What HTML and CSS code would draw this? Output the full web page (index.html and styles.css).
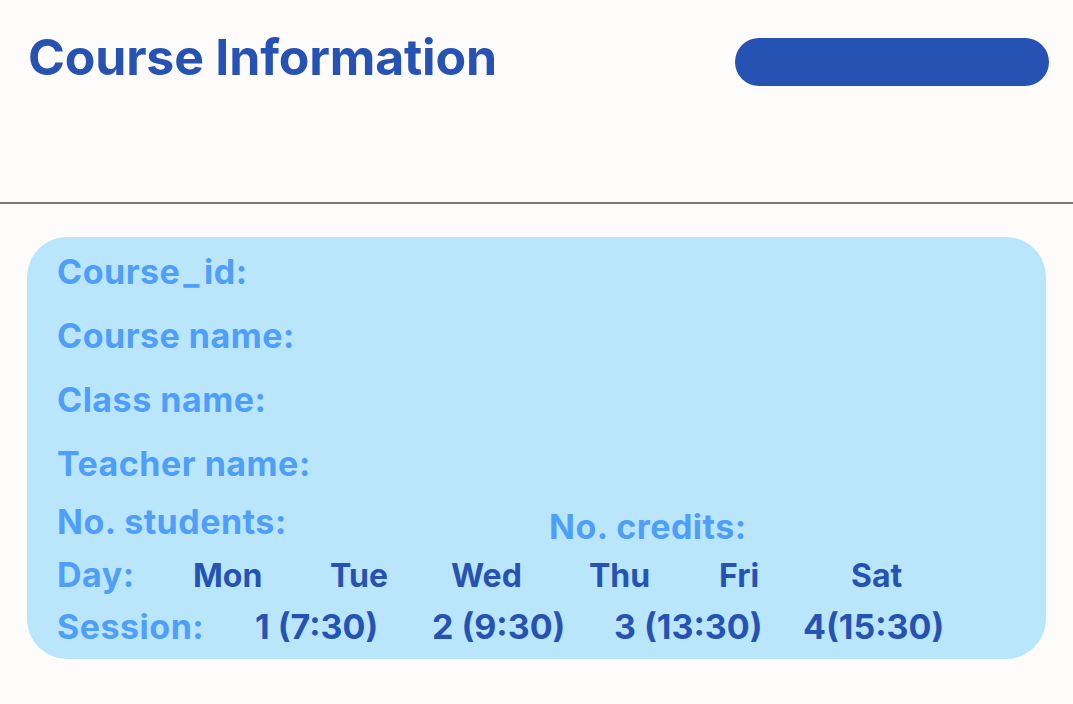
FILE: index.html
```html
<!DOCTYPE html>
<html>
<head>
<meta charset="utf-8">
<link rel="stylesheet" href="styles.css">
</head>
<body>
<header class="top">
  <h1 class="title">Course Information</h1>
  <div class="pill"></div>
</header>
<section class="card">
  <div class="row r1"><span class="label">Course<span class="us">_</span>id:</span></div>
  <div class="row r2"><span class="label">Course name:</span></div>
  <div class="row r3"><span class="label">Class name:</span></div>
  <div class="row r4"><span class="label">Teacher name:</span></div>
  <div class="row pair">
    <span class="label">No. students:</span>
    <span class="label credits">No. credits:</span>
  </div>
  <div class="row days">
    <span class="label">Day:</span>
    <span class="val">Mon</span>
    <span class="val">Tue</span>
    <span class="val">Wed</span>
    <span class="val">Thu</span>
    <span class="val">Fri</span>
    <span class="val">Sat</span>
  </div>
  <div class="row sessions">
    <span class="label">Session:</span>
    <span class="val">1 (7:30)</span>
    <span class="val">2 (9:30)</span>
    <span class="val">3 (13:30)</span>
    <span class="val">4(15:30)</span>
  </div>
</section>
</body>
</html>
```
FILE: styles.css
```css
html, body {
  margin: 0;
  padding: 0;
  background: #fefcfb;
}
body {
  font-family: Inter, "Noto Sans", sans-serif;
  font-weight: 700;
}
.top {
  display: flex;
  justify-content: space-between;
  align-items: flex-start;
  padding: 0 24px 0 28px;
  box-sizing: border-box;
  height: 204px;
  border-bottom: 2px solid #7a7a7a;
}
.title {
  margin: 27px 0 0 0;
  font-size: 50px;
  line-height: 60px;
  font-weight: 700;
  color: #2653b3;
  letter-spacing: -0.2px;
}
.pill {
  margin-top: 38px;
  width: 314px;
  height: 48px;
  border-radius: 24px;
  background: #2653b3;
}
.card {
  margin: 33px 27px 0 27px;
  height: 422px;
  background: #bae6fc;
  border-radius: 40px;
  padding: 15px 0 0 30px;
  box-sizing: border-box;
}
.row {
  display: flex;
  align-items: baseline;
  font-size: 34px;
  line-height: 40px;
  height: 40px;
}
.label {
  color: #4f9ef9;
  letter-spacing: 0.5px;
}
.us { margin: 0 4px 0 3px; }
.r2, .r3, .r4 { margin-top: 24px; }
.pair { margin-top: 18px; display: grid; grid-template-columns: 492px auto; }
.credits { position: relative; top: 5px; }
.days { margin-top: 13px; display: grid; grid-template-columns: 136px 137px 121px 138px 130px 132px auto; }
.sessions { margin-top: 12px; display: grid; grid-template-columns: 198px 177px 182px 189px auto; }
.val {
  color: #2653b3;
}
.days .val { font-size: 32px; }
.sessions .val { font-size: 34px; }
```
